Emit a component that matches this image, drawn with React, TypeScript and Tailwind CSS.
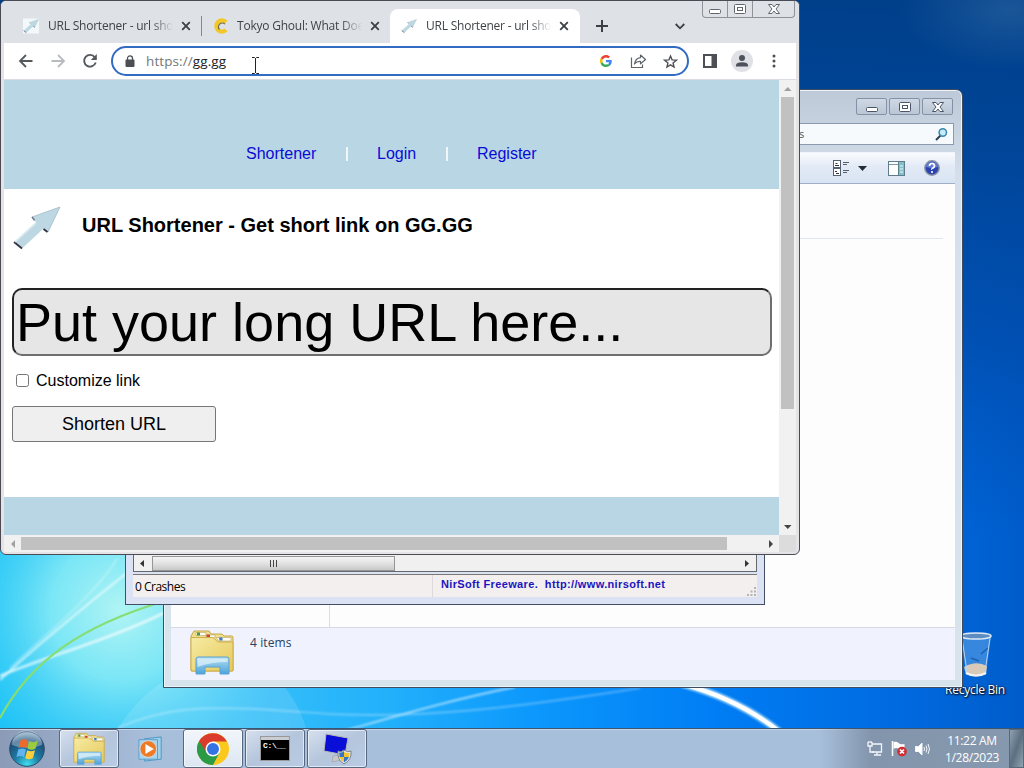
import React from "react";

const UI = "font-['Open_Sans','Noto_Sans',sans-serif]";
const PAGE = "font-['Liberation_Sans',Arial,sans-serif]";

function Wallpaper() {
  return (
    <svg className="absolute inset-0" width="1024" height="768" viewBox="0 0 1024 768">
      <defs>
        <linearGradient id="base" x1="0" y1="0" x2="1" y2="0">
          <stop offset="0" stopColor="#1cc3f6" />
          <stop offset="0.2" stopColor="#3cc4f8" />
          <stop offset="0.38" stopColor="#22b0fb" />
          <stop offset="0.52" stopColor="#0c98fc" />
          <stop offset="0.7" stopColor="#007df4" />
          <stop offset="0.88" stopColor="#006ae0" />
          <stop offset="1" stopColor="#005cca" />
        </linearGradient>
        <linearGradient id="dark" x1="0" y1="0" x2="0" y2="1">
          <stop offset="0" stopColor="#003f8a" />
          <stop offset="0.2" stopColor="#004496" stopOpacity="0.95" />
          <stop offset="0.45" stopColor="#004aa8" stopOpacity="0.7" />
          <stop offset="0.7" stopColor="#0050b8" stopOpacity="0" />
        </linearGradient>
        <radialGradient id="glow" gradientUnits="userSpaceOnUse" cx="120" cy="610" r="175">
          <stop offset="0" stopColor="#b0f4f4" />
          <stop offset="0.4" stopColor="#84eaf6" stopOpacity="0.9" />
          <stop offset="1" stopColor="#3cccf8" stopOpacity="0" />
        </radialGradient>
        <radialGradient id="haze" cx=".5" cy=".5" r=".5">
          <stop offset="0" stopColor="#4a7fae" stopOpacity=".35" />
          <stop offset="1" stopColor="#4a7fae" stopOpacity="0" />
        </radialGradient>
        <filter id="soft"><feGaussianBlur stdDeviation="0.9" /></filter>
      </defs>
      <rect width="1024" height="768" fill="url(#base)" />
      <rect width="1024" height="768" fill="url(#dark)" />
      <ellipse cx="1010" cy="10" rx="110" ry="60" fill="url(#haze)" />
      <rect width="420" y="430" height="338" fill="url(#glow)" />
      <path d="M118 728 C140 695 160 682 180 672 L270 672 C290 690 300 708 306 728Z" fill="#fff" opacity=".12" />
      <g fill="none" filter="url(#soft)" stroke="#fff">
        <path d="M0 680 C30 652 70 618 128 572" strokeWidth="2.2" opacity=".65" />
        <path d="M0 676 C50 655 110 640 170 610" strokeWidth="2.6" opacity=".7" />
        <path d="M10 668 C50 630 90 600 118 558" strokeWidth="1.5" opacity=".35" />
        <path d="M118 728 C180 700 240 708 330 714 C420 718 500 710 640 688" strokeWidth="2" opacity=".3" />
        <path d="M340 732 C400 715 450 700 515 687" strokeWidth="1.8" opacity=".6" />
      </g>
      <path d="M0 718 C30 662 80 626 165 601" fill="none" stroke="#86dd72" strokeWidth="2.2" />
      <path d="M682 684 C720 694 752 710 780 732" fill="none" stroke="#bfe6ff" strokeWidth="6.500" filter="url(#soft)" />
      <path d="M682 684 C720 694 752 710 780 732" fill="none" stroke="#fff" strokeWidth="4" />
    </svg>
  );
}

function RecycleBin() {
  return (
    <div className="absolute left-[935px] top-[632px] flex w-[80px] flex-col items-center">
      <svg className="ml-[2px]" width="34" height="46" viewBox="0 0 34 46">
        <path d="M2 4 L7 42 Q17 47 27 42 L32 4Z" fill="#5aa0e4" opacity=".6" />
        <path d="M5 35 Q17 28 28 34 L27 42 Q17 47 7 42Z" fill="#d9c9b8" />
        <path d="M7 41 Q17 46 27 41" stroke="#f4f4f4" strokeWidth="2" fill="none" />
        <path d="M22 22l7-6M12 26l8 3" stroke="#1c62b4" strokeWidth="1.500" />
        <ellipse cx="17" cy="4" rx="15" ry="3" fill="#5d8dc0" stroke="#dbe9f5" strokeWidth="1.5" />
        <path d="M3 6 L8 40M31 6 L26 40" stroke="#b5d5f3" fill="none" />
      </svg>
      <span className={`${UI} mt-[4px] whitespace-nowrap text-[12px] leading-[16px] tracking-[-0.25px] text-white [text-shadow:1px_1px_2px_#000,0_0_2px_#000]`}>Recycle Bin</span>
    </div>
  );
}

function Glyph({ kind, color = "#4b566b" }: { kind: "min" | "max" | "close"; color?: string }) {
  return (
    <svg width="14" height="12" viewBox="0 0 14 12" fill="#fff" stroke={color} strokeWidth="1">
      {kind === "min" && <rect x="1.5" y="6.5" width="11" height="4" rx="1" />}
      {kind === "max" && (
        <>
          <rect x="1.5" y="1.5" width="11" height="9" rx="1" />
          <rect x="4.5" y="4.5" width="5" height="3" />
        </>
      )}
      {kind === "close" && <path d="M1.5 1.5H5L7 4l2-2.500h3.500L9 6l3.500 4.500H9L7 8l-2 2.500H1.500L5 6z" />}
    </svg>
  );
}

function FolderIcon({ className }: { className: string }) {
  return (
    <svg className={className} viewBox="0 0 46 46">
      <defs>
        <linearGradient id="fy" x1="0" y1="0" x2="1" y2="1">
          <stop offset="0" stopColor="#f6eba4" />
          <stop offset="1" stopColor="#e6c95a" />
        </linearGradient>
        <linearGradient id="fb" x1="0" y1="0" x2="0" y2="1">
          <stop offset="0" stopColor="#b6def2" />
          <stop offset="1" stopColor="#4ba3dc" />
        </linearGradient>
      </defs>
      <path d="M2 7L5 2H20L22 5H33L35 7H43Q44 7 44 9V42H2Z" fill="#f0df8c" stroke="#c7a645" />
      <path d="M7 3.500h10v3H7zM17 6h9v3h-9z" fill="#fdfdf6" stroke="#b8a662" strokeWidth=".6" />
      <path d="M8 3.500h3v3H8z" fill="#4b9b45" />
      <path d="M17.500 5.500h3.500v3.500h-3.500z" fill="#d0442c" />
      <path d="M2 8.500H24L29 13H44V41Q44 42 42 42H4Q2 42 2 40Z" fill="url(#fy)" stroke="#cfae4c" />
      <path d="M27 8.500h15v3.500H30z" fill="#fdfdf6" stroke="#b8a662" strokeWidth=".6" />
      <path d="M30 8.500h3.500v3h-3z" fill="#4278bc" />
      <path d="M7 45V30Q7 28 9 28H38Q40 28 40 30V45H31V38H16V45Z" fill="url(#fb)" stroke="#5aa2cf" />
      <path d="M8.500 29.500H38.500V33Q22 33 8.500 38Z" fill="#e2f4fa" opacity=".7" />
    </svg>
  );
}

function ExplorerWindow() {
  return (
    <section className="absolute left-[163px] top-[89px] flex h-[599px] w-[800px] flex-col rounded-t-[7px] border border-[#3c4d63] bg-gradient-to-b from-[#bdc9d8] via-[#d6e0ec] via-15% to-[#d8e4ec] px-[7px] pb-[7px] shadow-[inset_0_0_0_1px_#edf4f9]">
      <header className="flex h-[33px] items-start justify-end gap-[2px] pr-[2px] pt-[8px]">
        {(["min", "max", "close"] as const).map((k) => (
          <button key={k} className="flex h-[17px] w-[31px] items-center justify-center rounded-[2px] border border-[#8492a6] bg-gradient-to-b from-[#cfd8e4] to-[#bac6d5]">
            <Glyph kind={k} />
          </button>
        ))}
      </header>
      <div className="flex h-[22px] justify-end pr-[1px]">
        <div className="flex w-[240px] items-center justify-between border border-[#8b9aae] bg-[#f6fafd] pl-[84px] pr-[4px]">
          <span className={`${UI} text-[11px] text-[#555]`}>s</span>
          <svg width="15" height="15" viewBox="0 0 15 15" fill="none">
            <path d="M6.500 8.500L2 13" stroke="#2c4054" strokeWidth="2" />
            <circle cx="8.800" cy="5.500" r="3.700" fill="#c5eaf8" stroke="#3b86ac" strokeWidth="1.500" />
          </svg>
        </div>
      </div>
      <div className="mt-[7px] flex h-[32px] items-center justify-end border-b border-t border-b-[#9db0c7] border-t-[#edf4fc] bg-gradient-to-b from-[#fafcfe] via-[#e3eaf6] via-45% to-[#d8e4f3] pr-[15px]">
        <svg width="17" height="17" viewBox="0 0 17 17" fill="none" stroke="#536170">
          <rect x=".5" y=".5" width="7" height="7" fill="#fff" />
          <rect x=".5" y="8.500" width="7" height="7" fill="#fff" />
          <path d="M2 5.500h4M2.500 3.500h2M2 11.500h2M3 13.500h3" stroke="#333" />
          <path d="M10 2.500h6M10 4.500h4M10 10.500h6M10 12.500h4" />
        </svg>
        <svg className="ml-[8px]" width="9" height="5" viewBox="0 0 9 5"><path d="M0 0h9L4.500 5z" fill="#222c3c" /></svg>
        <svg className="ml-[21px]" width="17" height="15" viewBox="0 0 17 15">
          <rect x=".5" y=".5" width="16" height="14" fill="#fff" stroke="#5e7c8e" />
          <path d="M1 3.500h15" stroke="#7c98a8" />
          <rect x="10" y="1" width="6" height="13" fill="#83bfc5" />
          <path d="M10.500 1v13" stroke="#54828c" />
          <path d="M12 5h3M12 8h3M12 11h3" stroke="#e6ffff" />
        </svg>
        <svg className="ml-[19px]" width="16" height="16" viewBox="0 0 16 16">
          <circle cx="8" cy="8" r="7.200" fill="#2a43b1" stroke="#8994a7" strokeWidth="1.500" />
          <path d="M2 7a6 5 0 0112 0Q8 9 2 7" fill="#7a92e0" opacity=".7" />
          <path d="M5.500 6q0-2.500 2.500-2.500T10.500 6Q10.500 7 9 8t-1 1.500" fill="none" stroke="#fff" strokeWidth="1.700" />
          <circle cx="8" cy="12" r="1.100" fill="#fff" />
        </svg>
      </div>
      <main className="flex min-h-0 flex-1 bg-[#fdfdfe]">
        <div className="w-[159px] border-r border-[#d9dde5]" />
        <div className="flex-1">
          <div className="mr-[12px] h-[55px] border-b border-[#e0e5ea]" />
        </div>
      </main>
      <footer className="flex h-[53px] border-t border-[#d5d9e4] bg-[#f0f3fd] pl-[18px]">
        <FolderIcon className="mt-[1px] h-[46px] w-[46px]" />
        <span className={`${UI} ml-[15px] mt-[6px] text-[12px] leading-[17px] tracking-[0.1px] text-[#28405c]`}>4 items</span>
      </footer>
    </section>
  );
}

function CrashWindow() {
  return (
    <section className="absolute left-[125px] top-[400px] flex h-[205px] w-[640px] flex-col justify-end border border-[#434e66] bg-[#dbe2f3] px-[7px] pb-[7px]">
      <div className="flex h-[18px] items-center border border-[#65696d] bg-[#f1f0f1]">
        <svg className="ml-[6px]" width="4" height="7" viewBox="0 0 4 7"><path d="M4 0v7L0 3.500z" fill="#333" /></svg>
        <div className="ml-[8px] flex h-[15px] w-[243px] items-center justify-center gap-[2px] border border-[#969696] bg-gradient-to-b from-[#f4f4f4] via-[#e2e2e2] to-[#c8c8c8]">
          <i className="h-[7px] w-px bg-[#444]" />
          <i className="h-[7px] w-px bg-[#444]" />
          <i className="h-[7px] w-px bg-[#444]" />
        </div>
        <svg className="ml-auto mr-[7px]" width="4" height="7" viewBox="0 0 4 7"><path d="M0 0v7L4 3.500z" fill="#333" /></svg>
      </div>
      <div className="mt-[2px] flex h-[23px] border-t border-[#777] bg-[#f2efee]">
        <span className={`${UI} w-[300px] border-r border-[#dcdada] pl-[2px] pt-[4px] text-[12px] leading-[16px] tracking-[-0.5px] text-black`}>0 Crashes</span>
        <span className={`${PAGE} whitespace-pre pl-[8px] pt-[2px] text-[11px] font-bold leading-[14px] tracking-[0.35px] text-[#1c14c0]`}>{"NirSoft Freeware.  http://www.nirsoft.net"}</span>
        <svg className="ml-auto mt-[12px]" width="10" height="10" viewBox="0 0 10 10" fill="#b4b4b4">
          <path d="M7 0h2v2H7zM7 3.500h2v2H7zM3.500 3.500h2v2h-2zM7 7h2v2H7zM3.500 7h2v2h-2zM0 7h2v2H0z" />
        </svg>
      </div>
    </section>
  );
}

function ArrowLogo({ className, tile }: { className: string; tile?: boolean }) {
  return (
    <svg className={className} viewBox="0 0 49 46">
      {tile && <rect width="49" height="46" fill="#f3f8fb" />}
      <path d="M48 2L36 27l-5-3L10 43.500 2 37 24 17l-4-5z" fill="#bdd8e2" />
      <path d="M48 2L20 12l3 4M32 24l4 3L48 2" fill="none" stroke="#a3bac4" strokeWidth="0.8" />
      <path d="M2 37l8 6.500M31.500 24l4 3" stroke="#334" strokeWidth="1.800" />
      <path d="M20 12l2.500 3.200" stroke="#6b7c88" strokeWidth="1.500" />
      <path d="M3 37L24 18" stroke="#dcecf3" strokeWidth="1.500" />
    </svg>
  );
}

function CloseX() {
  return (
    <svg width="10" height="10" viewBox="0 0 10 10" stroke="#3c4043" strokeWidth="1.800"><path d="M1.200 1.200l7.600 7.600M8.800 1.200L1.200 8.800" /></svg>
  );
}

function Tab({ title, icon, active, divider }: { title: string; icon: React.ReactNode; active?: boolean; divider?: boolean }) {
  return (
    <div className={`flex h-[34px] shrink-0 items-center ${active ? "w-[190px] rounded-t-[8px] bg-white" : "w-[189px]"}`}>
      <i className={`h-[20px] w-px ${divider ? "bg-[#85888c]" : ""}`} />
      <span className="ml-[10px] flex h-[16px] w-[16px] items-center justify-center">{icon}</span>
      <span className={`${UI} ml-[9px] w-[125px] whitespace-nowrap text-[12px] tracking-[-0.22px] text-[#3f4347] [mask-image:linear-gradient(to_right,#000_83%,transparent)]`}>{title}</span>
      <span className="ml-[8px]"><CloseX /></span>
    </div>
  );
}

function TabStrip() {
  return (
    <div className="flex h-[42px] items-end bg-[#dee1e6] pl-[11px]">
      <Tab title="URL Shortener - url sho" icon={<ArrowLogo className="h-[16px] w-[16px]" tile />} />
      <Tab
        title="Tokyo Ghoul: What Doe"
        divider
        icon={
          <svg width="15" height="16" viewBox="0 0 15 16" fill="none">
            <path d="M13 4.200A5.600 5.600 0 1013 11.800" stroke="#f2c829" strokeWidth="4.200" />
            <path d="M12 6.200A3.600 3.600 0 106.500 11.500" stroke="#756a41" strokeWidth="1.200" />
          </svg>
        }
      />
      <Tab title="URL Shortener - url sho" active icon={<ArrowLogo className="h-[16px] w-[16px]" />} />
      <div className="flex h-[34px] items-center">
        <svg className="ml-[16px]" width="12" height="12" viewBox="0 0 12 12" stroke="#3c4043" strokeWidth="2"><path d="M6 0v12M0 6h12" /></svg>
        <svg className="ml-[67px]" width="10" height="7" viewBox="0 0 10 7" fill="none" stroke="#3c4043" strokeWidth="1.800"><path d="M.7 1L5 5.300 9.300 1" /></svg>
      </div>
      <div className="ml-[17px] flex h-[17px] self-start rounded-b-[4px] border border-t-0 border-[#8d929b]">
        <span className="flex w-[25px] items-center justify-center border-r border-[#8d929b]"><Glyph kind="min" color="#62666e" /></span>
        <span className="flex w-[25px] items-center justify-center border-r border-[#8d929b]"><Glyph kind="max" color="#62666e" /></span>
        <span className="flex w-[41px] items-center justify-center"><Glyph kind="close" color="#62666e" /></span>
      </div>
    </div>
  );
}

function Toolbar() {
  return (
    <div className="mx-[3px] flex h-[37px] items-center border-b border-[#d9dde1] bg-white pl-[14px]">
      <svg width="16" height="16" viewBox="0 0 16 16" fill="none" stroke="#55595d" strokeWidth="1.800"><path d="M14.500 8H2.500M8 2L2 8l6 6" /></svg>
      <svg className="ml-[16px]" width="16" height="16" viewBox="0 0 16 16" fill="none" stroke="#b9bbbe" strokeWidth="1.800"><path d="M1.500 8h12M8 2l6 6-6 6" /></svg>
      <svg className="ml-[15px]" width="18" height="18" viewBox="0 0 18 18" fill="none">
        <path d="M13.800 5.200A5.900 5.900 0 1014.700 10.500" stroke="#55595d" strokeWidth="1.900" />
        <path d="M15.800 2v6H9.800z" fill="#55595d" />
      </svg>
      <div className="ml-[12px] flex h-[30px] w-[578px] items-center rounded-full border-2 border-[#316bc3] bg-white pl-[12px]">
        <svg width="10" height="13" viewBox="0 0 10 13">
          <rect x="0.500" y="4.500" width="9" height="7.500" rx="1" fill="#4c4f54" />
          <path d="M2.500 5V3.400a2.500 2.500 0 015 0V5" fill="none" stroke="#4c4f54" strokeWidth="1.300" />
        </svg>
        <span className={`${UI} ml-[11px] text-[13.5px] leading-[20px] tracking-[0.1px] text-[#202124]`}><span className="text-[#73777b]">https://</span>gg.gg</span>
        <svg className="ml-auto" width="12" height="12" viewBox="0 0 48 48">
          <path fill="#EA4335" d="M24 9.500c3.540 0 6.710 1.220 9.210 3.600l6.850-6.850C35.900 2.380 30.470 0 24 0 14.620 0 6.510 5.380 2.560 13.220l7.980 6.190C12.430 13.720 17.740 9.500 24 9.500z" />
          <path fill="#4285F4" d="M46.980 24.550c0-1.570-.15-3.090-.38-4.550H24v9.020h12.940c-.58 2.960-2.260 5.480-4.780 7.180l7.730 6c4.510-4.180 7.090-10.360 7.090-17.650z" />
          <path fill="#FBBC05" d="M10.530 28.590A14.500 14.500 0 0110.530 19.410l-7.980-6.190a24 24 0 000 21.560l7.980-6.190z" />
          <path fill="#34A853" d="M24 48c6.480 0 11.930-2.130 15.890-5.810l-7.730-6c-2.150 1.450-4.920 2.300-8.160 2.300-6.260 0-11.570-4.220-13.470-9.910l-7.980 6.190C6.510 42.620 14.620 48 24 48z" />
        </svg>
        <svg className="ml-[18px]" width="17" height="15" viewBox="0 0 17 15" fill="none" stroke="#5f6368" strokeWidth="1.200">
          <path d="M1.500 3.500v10h11v-3" />
          <path d="M10.500 1l5 4.500-5 4.300V7.400C8 7.200 6 8 4.500 10 5 6.500 7 4 10.500 3.600z" strokeLinejoin="round" />
        </svg>
        <svg className="ml-[16px] mr-[9px]" width="15" height="15" viewBox="0 0 24 24" fill="none" stroke="#4c5054" strokeWidth="2.200"><path d="M12 3.200l2.500 6.200 6.800.5-5.200 4.400 1.600 6.600-5.700-3.500-5.700 3.500 1.600-6.600-5.200-4.400 6.800-.5z" /></svg>
      </div>
      <svg className="ml-[14px]" width="14" height="14" viewBox="0 0 14 14"><rect x="1" y="1" width="12" height="12" fill="#fff" stroke="#4c5054" strokeWidth="2" /><rect x="8.500" y="1" width="5" height="12" fill="#4c5054" /></svg>
      <svg className="ml-[14px]" width="22" height="22" viewBox="0 0 22 22">
        <circle cx="11" cy="11" r="11" fill="#dfe1e6" />
        <circle cx="11" cy="8" r="3" fill="#4d515b" />
        <path d="M5 16.500v-1.300q0-2.900 6-2.900t6 2.900v1.300z" fill="#4d515b" />
      </svg>
      <svg className="ml-[19px]" width="4" height="14" viewBox="0 0 4 14" fill="#4c5054"><circle cx="2" cy="2" r="1.500" /><circle cx="2" cy="7" r="1.500" /><circle cx="2" cy="12" r="1.500" /></svg>
    </div>
  );
}

function PageContent() {
  return (
    <div className={`${PAGE} flex w-[775px] flex-col bg-white text-black`}>
      <nav className="flex h-[109px] items-start bg-[#b8d6e3] pl-[242px] pt-[64px] text-[16px] leading-[19px] text-[#0a0ad8]">
        <a className="w-[70px]">Shortener</a>
        <i className="ml-[30px] mt-[3px] h-[14px] w-[2px] bg-white/80" />
        <a className="ml-[29px] w-[40px]">Login</a>
        <i className="ml-[29px] mt-[3px] h-[14px] w-[2px] bg-white/80" />
        <a className="ml-[29px]">Register</a>
      </nav>
      <main className="flex flex-1 flex-col pl-[8px] pr-[7px]">
        <div className="mt-[16px] flex h-[46px] items-center">
          <ArrowLogo className="h-[46px] w-[49px]" />
          <h1 className="ml-[21px] mt-[-6px] text-[20px] font-bold leading-[24px]">URL Shortener - Get short link on GG.GG</h1>
        </div>
        <div className="mt-[37px] flex h-[68px] items-center whitespace-nowrap rounded-[10px] border-2 border-b-[#6f6f6f] border-l-[#222] border-r-[#6f6f6f] border-t-[#222] bg-[#e6e6e6] pl-[2px] text-[54px] leading-[64px]">Put your long URL here...</div>
        <label className="mt-[15px] flex h-[19px] items-center text-[16px] leading-[19px]">
          <i className="ml-[4px] mt-[-1px] h-[13px] w-[13px] rounded-[2.5px] border border-[#767676] bg-white" />
          <span className="ml-[7px]">Customize link</span>
        </label>
        <button className="mt-[16px] h-[36px] w-[204px] rounded-[3px] border border-[#767676] bg-[#efefef] text-[18px]">Shorten URL</button>
      </main>
      <footer className="h-[38px] bg-[#b8d6e3]" />
    </div>
  );
}

function BrowserWindow() {
  return (
    <section className="absolute left-0 top-0 flex h-[555px] w-[800px] flex-col overflow-hidden rounded-[6px] border border-[#4b4b55] bg-[#e6e3e7]">
      <TabStrip />
      <Toolbar />
      <div className="mx-[3px] flex h-[455px]">
        <PageContent />
        <div className="flex w-[17px] flex-col items-center bg-[#f1f1f1]">
          <span className="flex h-[17px] items-center"><svg width="8" height="4" viewBox="0 0 8 4"><path d="M0 4h7.500L3.800 0z" fill="#a0a0a0" /></svg></span>
          <div className="h-[312px] w-[13px] bg-[#c1c1c1]" />
          <span className="mt-auto flex h-[17px] items-center"><svg width="8" height="4" viewBox="0 0 8 4"><path d="M0 0h7.500L3.800 4z" fill="#444" /></svg></span>
        </div>
      </div>
      <div className="mx-[3px] flex h-[17px] bg-[#dcdcdc]">
        <div className="flex w-[775px] items-center bg-[#f1f1f1]">
          <span className="flex w-[17px] justify-center"><svg width="4" height="8" viewBox="0 0 4 8"><path d="M4 0v8L0 4z" fill="#a0a0a0" /></svg></span>
          <div className="h-[13px] w-[706px] bg-[#c1c1c1]" />
          <span className="ml-auto flex w-[17px] justify-center"><svg width="4" height="8" viewBox="0 0 4 8"><path d="M0 0v8L4 4z" fill="#444" /></svg></span>
        </div>
      </div>
    </section>
  );
}

function TaskButton({ children, bright }: { children: React.ReactNode; bright?: boolean }) {
  return (
    <div className={`flex h-[39px] w-[60px] items-center justify-center rounded-[3px] border border-[#56677f] shadow-[inset_0_0_0_1px_rgba(255,255,255,0.6)] ${bright ? "bg-gradient-to-b from-[#f2f6fb] to-[#dce6f2]" : "bg-gradient-to-br from-[#d6e0ee] via-[#b4c5dc] to-[#b9cce5]"}`}>
      {children}
    </div>
  );
}

function Taskbar() {
  return (
    <div className="absolute bottom-0 left-0 flex h-[40px] w-[1024px] items-center border-t border-[#3d566f] bg-gradient-to-r from-[#8b9bb7] via-[#a8bfdc] via-15% to-[#a8bfdc] shadow-[inset_0_1px_0_#c4d3e5]">
      <svg className="ml-[8px]" width="38" height="38" viewBox="0 0 38 38">
        <defs>
          <radialGradient id="orb" cx=".5" cy=".95" r=".9">
            <stop offset="0" stopColor="#3fe0ef" />
            <stop offset=".4" stopColor="#1d7ea6" />
            <stop offset=".8" stopColor="#1d4e78" />
            <stop offset="1" stopColor="#86a6c0" />
          </radialGradient>
        </defs>
        <circle cx="19" cy="19" r="17.300" fill="url(#orb)" stroke="#2b4a66" />
        <path d="M4 15A15 15 0 0134 15Q19 21 4 15" fill="#cfe0ea" opacity=".4" />
        <path d="M12.500 10.500Q16 8 20 10.500L18.500 18Q14.500 16 10.500 18z" fill="#ee6a2c" />
        <path d="M21 11q4 2.500 9-.5L27.500 18.500Q23.500 21 19.500 18.500z" fill="#9ccb3c" />
        <path d="M10.200 19.500Q14 17.500 18 19.500L16 27Q12.500 25 8.500 27z" fill="#62b4ee" />
        <path d="M19.200 20.200Q23 22.500 27 20.200L25 28Q21 30.500 17.200 28z" fill="#fbcf3c" />
      </svg>
      <div className="ml-[13px] flex">
        <TaskButton><FolderIcon className="h-[33px] w-[34px]" /></TaskButton>
      </div>
      <div className="flex w-[64px] justify-center">
        <svg width="28" height="26" viewBox="0 0 30 28">
          <path d="M8 3l18-2v24l-18 2z" fill="#9fd0ec" stroke="#4c94c0" />
          <path d="M2 4h20v21H2z" fill="#a8d4ee" stroke="#589cc8" />
          <circle cx="12" cy="14" r="9" fill="#ed7a26" stroke="#d6dbe0" />
          <path d="M9 8.500v11l9-5.500z" fill="#fff" />
        </svg>
      </div>
      <div className="flex gap-[2px]">
        <TaskButton bright>
          <svg width="32" height="32" viewBox="0 0 32 32">
            <circle cx="16" cy="16" r="16" fill="#fbc91d" />
            <path d="M2.140 8A16 16 0 0016 32L22.500 19.700 16 16z" fill="#2a9a47" />
            <path d="M2.140 8A16 16 0 0129.860 8.500H16L9.500 19.700z" fill="#db3b2b" />
            <circle cx="16" cy="16" r="7.500" fill="#fff" />
            <circle cx="16" cy="16" r="6" fill="#3573e2" />
          </svg>
        </TaskButton>
        <TaskButton>
          <div className="flex h-[25px] w-[30px] flex-col border border-[#999] bg-black">
            <i className="h-[3px] bg-[#c9cdd2]" />
            <span className="pl-[2px] font-['Liberation_Mono',monospace] text-[8px] font-bold leading-[11px] tracking-[-0.3px] text-white">C:\__</span>
          </div>
        </TaskButton>
        <TaskButton>
          <svg width="30" height="32" viewBox="0 0 30 32">
            <path d="M11 23l6-1 2 5-9 2z" fill="#c7c9c9" stroke="#8e9498" strokeWidth=".5" />
            <path d="M4 1l22 4-3 17-21-4z" fill="#0a0fd8" stroke="#b8bbb0" />
            <path d="M22 17q4 3 7 1 1 9-7 13-7-4-6-13 3 2 6-1z" fill="#e5e8ea" stroke="#79838c" />
            <path d="M22 19v5h-4.500l-.3-4.500q3 .5 4.800-1.500zM22 24h5q-1 3-5 5.500z" fill="#3374c4" />
            <path d="M22 19q2 1.500 5.500 1l-.5 4h-5zM17.500 24H22v5.500q-3.500-2.500-4.500-5.500z" fill="#f4c42b" />
          </svg>
        </TaskButton>
      </div>
      <div className={`${UI} ml-auto flex h-[39px] w-[204px] items-center bg-gradient-to-r from-transparent via-[#8395ac] via-25% to-[#8799ae] text-white`}>
        <svg className="ml-[46px]" width="18" height="16" viewBox="0 0 18 16" fill="none" stroke="#f2f6fa" strokeWidth="1.300">
          <path d="M6 3h9.500v8H6M8 14h7M11 11v3" />
          <path d="M2 1v4h4V1M4 5v6h4M3 0v2M5 0v2" />
        </svg>
        <svg className="ml-[7px]" width="17" height="17" viewBox="0 0 17 17">
          <path d="M1.500 1v15" stroke="#fff" strokeWidth="1.500" />
          <path d="M2.500 2q3-1 5 1t6 1v6q-4 1-6-1t-5 0z" fill="#fff" />
          <circle cx="11" cy="11.500" r="4.800" fill="#d22c33" />
          <path d="M9 9.500l4 4M13 9.500l-4 4" stroke="#fff" strokeWidth="1.700" />
        </svg>
        <svg className="ml-[7px]" width="16" height="14" viewBox="0 0 16 14" fill="none" stroke="#f4f8fc">
          <path d="M.5 4.500h3L7 1v12L3.500 9.500h-3z" fill="#fff" />
          <path d="M9 5q1 2 0 4M11 3.500q2 3.500 0 7M13 2q3 5 0 10" />
        </svg>
        <div className="ml-auto flex w-[76px] flex-col items-center text-[12px] leading-[17px] tracking-[-0.3px]">
          <span>11:22 AM</span>
          <span>1/28/2023</span>
        </div>
        <div className="ml-[-1px] h-[39px] w-[15px] border border-[#59697b] bg-gradient-to-br from-[#8fa0b1] via-[#5c6f80] to-[#90a4b4]" />
      </div>
    </div>
  );
}

export default function App() {
  return (
    <div className="relative h-[768px] w-[1024px] overflow-hidden bg-[#0058c2]">
      <Wallpaper />
      <RecycleBin />
      <ExplorerWindow />
      <CrashWindow />
      <BrowserWindow />
      <Taskbar />
      <svg className="absolute left-[251px] top-[57px]" width="9" height="17" viewBox="0 0 9 17" fill="none" stroke="#222">
        <path d="M1 .5h2.500L4.500 1.500 5.500.5H8M1 16.500h2.500l1-1 1 1H8M4.500 1v15" />
      </svg>
    </div>
  );
}
